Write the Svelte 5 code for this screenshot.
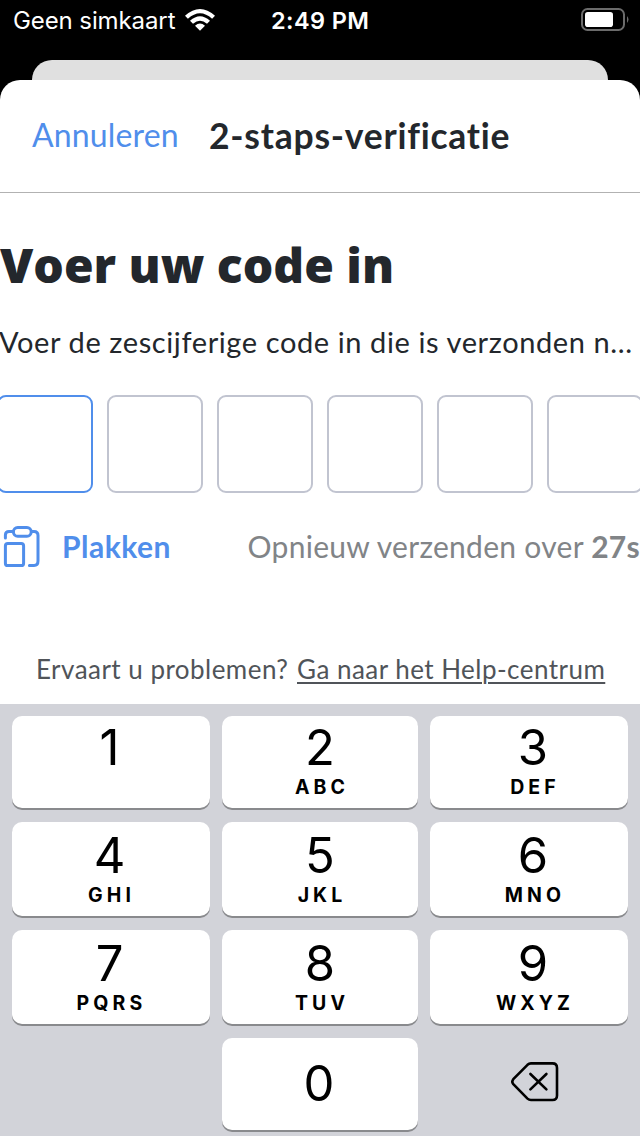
<script>
    const codeLength = 6;
    let code = $state("");
    let secondsLeft = $state(27);

    const keys = [
        { digit: "1", letters: "" },
        { digit: "2", letters: "ABC" },
        { digit: "3", letters: "DEF" },
        { digit: "4", letters: "GHI" },
        { digit: "5", letters: "JKL" },
        { digit: "6", letters: "MNO" },
        { digit: "7", letters: "PQRS" },
        { digit: "8", letters: "TUV" },
        { digit: "9", letters: "WXYZ" },
    ];

    function press(digit) {
        if (code.length < codeLength) {
            code += digit;
        }
    }

    function erase() {
        code = code.slice(0, -1);
    }
</script>

<main>
    <div class="status">
        <span class="carrier">Geen simkaart</span>
        <svg class="wifi" width="30" height="22" viewBox="0 0 30 22">
            <path d="M0 6.8Q15 -6.8 30 6.8L27.1 9.7Q15 -1.4 2.9 9.7Z" />
            <path d="M5 11.8Q15 2.6 25 11.8L22 14.8Q15 8.5 8 14.8Z" />
            <path d="M10 16.8Q15 12.3 20 16.8L15 21.8Z" />
        </svg>
        <span class="time">2:49 PM</span>
        <svg class="battery" width="48" height="23" viewBox="0 0 48 23">
            <rect x="1" y="1" width="42" height="21" rx="5.5" fill="none" stroke="#6b6b6b" stroke-width="2" />
            <rect x="4" y="4" width="28" height="15" rx="2.8" fill="#fff" />
            <path d="M46 8Q49 11.5 46 15Z" fill="#6b6b6b" />
        </svg>
    </div>
    <div class="backcard"></div>
    <div class="sheet">
        <header>
            <button class="cancel">Annuleren</button>
            <h2>2-staps-verificatie</h2>
        </header>
        <h1>Voer uw code in</h1>
        <p class="intro">Voer de zescijferige code in die is verzonden n...</p>
        <div class="boxes">
            {#each Array(codeLength) as _, i}
                <div class="box" class:active={i === code.length}>{code[i] ?? ""}</div>
            {/each}
        </div>
        <div class="actions">
            <button class="paste">
                <svg width="38" height="44" viewBox="0 0 38 44" fill="none" stroke="#508eeb" stroke-width="3" stroke-linecap="round" stroke-linejoin="round">
                    <rect x="10.4" y="2.6" width="17.8" height="8.6" rx="4.3" />
                    <path d="M2.4 13V10Q2.4 6.6 6 6.6H10M28.5 6.6H31Q35 6.6 35 10.6V36Q35 40.4 31 40.4H26.4" />
                    <rect x="2.4" y="18.4" width="18.2" height="22.2" rx="2.4" />
                </svg>
                <span>Plakken</span>
            </button>
            <span class="resend">Opnieuw verzenden over <b>{secondsLeft}s</b></span>
        </div>
        <div class="help">
            <span class="question">Ervaart u problemen?</span>
            <span class="link">Ga naar het Help-centrum</span>
        </div>
    </div>
    <div class="keyboard">
        {#each keys as key}
            <button class="key" onclick={() => press(key.digit)}>
                <span class="digit">{key.digit}</span>
                <span class="letters">{key.letters}</span>
            </button>
        {/each}
        <div></div>
        <button class="key zero" onclick={() => press("0")}>
            <span class="digit">0</span>
        </button>
        <button class="erase" onclick={erase} aria-label="Wissen">
            <svg width="48" height="40" viewBox="0 0 48 40" fill="none" stroke="#000" stroke-width="2.6" stroke-linecap="round" stroke-linejoin="round">
                <path d="M20 1.4H41.5Q46 1.4 46 6V33.5Q46 38 41.5 38H20Q18 38 16.5 36.6L2.3 22.2Q0.3 19.8 2.3 17.2L16.5 2.8Q18 1.4 20 1.4Z" />
                <path d="M19.4 12L35.4 27.4M35.4 12L19.4 27.4" />
            </svg>
        </button>
    </div>
</main>

<style>
    :global(body) {
        background: #000;
    }
    main {
        width: 640px;
        height: 1136px;
        overflow: hidden;
        display: flex;
        flex-direction: column;
        background: #000;
        font-family: Lato, sans-serif;
        color: #23272c;
    }
    button {
        border: none;
        background: none;
        padding: 0;
        margin: 0;
        font: inherit;
        color: inherit;
    }
    .status {
        height: 60px;
        flex: none;
        display: flex;
        align-items: flex-start;
        color: #fff;
        font-family: Inter, sans-serif;
        font-size: 24px;
        line-height: 42px;
        white-space: nowrap;
    }
    .carrier {
        width: 171px;
        margin-left: 13px;
        letter-spacing: -0.1px;
    }
    .wifi {
        margin: 9px 0 0 1px;
        fill: #fff;
    }
    .time {
        margin-left: 56px;
        width: 310px;
        font-size: 23.5px;
        font-weight: 600;
        letter-spacing: 0.4px;
    }
    .battery {
        margin-top: 8px;
    }
    .backcard {
        flex: none;
        height: 20px;
        margin: 0 32px;
        border-radius: 20px 20px 0 0;
        background: #e0e0e0;
    }
    .sheet {
        flex: none;
        height: 624px;
        display: flex;
        flex-direction: column;
        background: #fff;
        border-radius: 20px 20px 0 0;
        white-space: nowrap;
    }
    header {
        height: 112px;
        display: flex;
        align-items: center;
        border-bottom: 1px solid #b2b2b2;
        padding-left: 32px;
    }
    .cancel {
        width: 177px;
        margin-bottom: 2px;
        text-align: left;
        font-size: 32px;
        line-height: 40px;
        letter-spacing: 0.15px;
        color: #508eeb;
    }
    h2 {
        margin: 0 0 1px;
        font-size: 35.5px;
        line-height: 40px;
        font-weight: 700;
        letter-spacing: 0.76px;
    }
    h1 {
        margin: 42px 0 0 0;
        font-family: "Open Sans", sans-serif;
        font-size: 48px;
        line-height: 60px;
        font-weight: 800;
    }
    .intro {
        margin: 27px 0 0 -1px;
        font-size: 29px;
        line-height: 40px;
        letter-spacing: 0.6px;
    }
    .boxes {
        display: flex;
        gap: 14px;
        margin: 33px 0 0 -3px;
    }
    .box {
        flex: none;
        box-sizing: border-box;
        width: 96px;
        height: 98px;
        border: 2px solid #c1c4d0;
        border-radius: 9px;
        font-size: 44px;
        line-height: 94px;
        text-align: center;
    }
    .box.active {
        border-color: #508eeb;
    }
    .actions {
        height: 44px;
        margin: 32px 0 0 3px;
        display: flex;
        align-items: center;
        font-size: 30px;
    }
    .paste {
        width: 245px;
        display: flex;
        align-items: center;
        gap: 21px;
        color: #508eeb;
        font-weight: 700;
        letter-spacing: 0.5px;
    }
    .paste span,
    .resend {
        padding-bottom: 2px;
    }
    .resend {
        color: #818487;
        letter-spacing: 0.28px;
    }
    .help {
        margin: 80px 0 0 36px;
        display: flex;
        font-size: 26px;
        line-height: 40px;
        letter-spacing: 0.47px;
        color: #505459;
    }
    .question {
        width: 261px;
    }
    .link {
        text-decoration: underline;
        text-decoration-thickness: 2px;
        text-underline-offset: 3px;
    }
    .keyboard {
        flex: 1;
        display: grid;
        grid-template-columns: 198px 196px 198px;
        grid-template-rows: 92px 94px 94px 92px;
        gap: 14px 12px;
        padding: 12px 12px 6px;
        background: #d2d3d9;
        font-family: Inter, sans-serif;
        color: #000;
    }
    .key {
        display: flex;
        flex-direction: column;
        align-items: center;
        justify-content: flex-end;
        background: #fff;
        border-radius: 10px;
        box-shadow: 0 2px 0 #898a8d;
    }
    .key:nth-child(3n + 1) {
        padding-right: 3px;
    }
    .key:nth-child(3n) {
        padding-left: 8px;
    }
    .digit {
        font-size: 49px;
        line-height: 54px;
    }
    .letters {
        height: 24px;
        margin-bottom: 9px;
        font-size: 19.5px;
        line-height: 24px;
        font-weight: 700;
        letter-spacing: 4.1px;
        padding-left: 4px;
    }
    .zero {
        justify-content: center;
        padding-right: 2px;
    }
    .erase {
        display: flex;
        align-items: center;
        justify-content: center;
        padding: 0 0 4px 12px;
    }
</style>
